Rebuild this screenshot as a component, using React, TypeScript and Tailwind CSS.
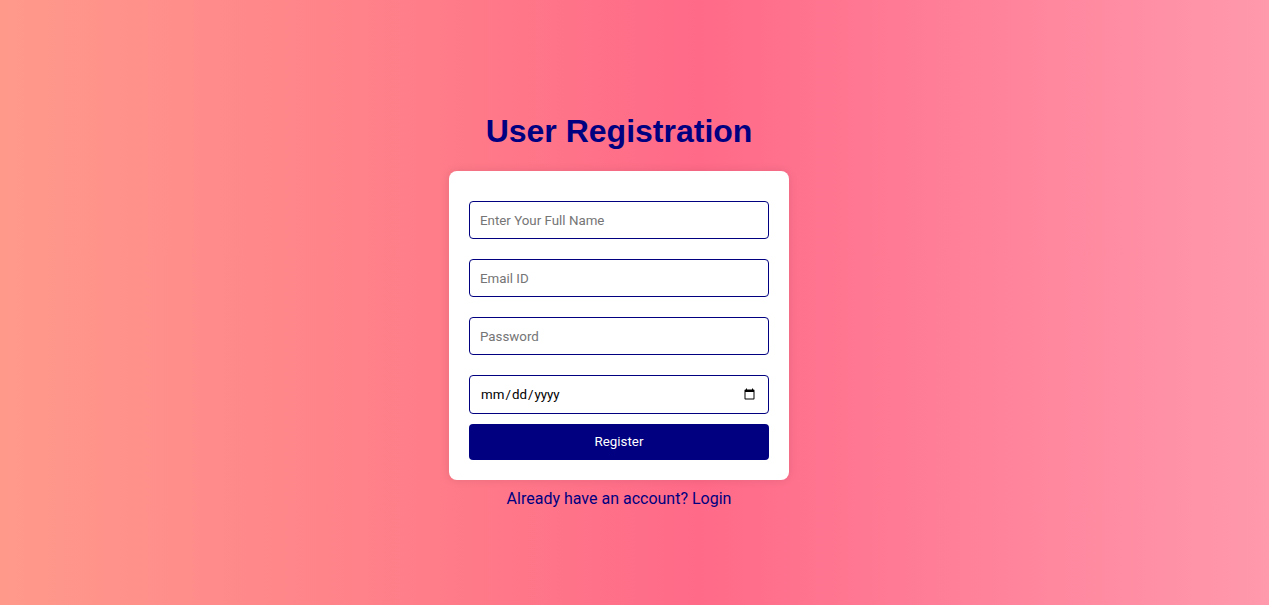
export default function App() {
  const inputCls =
    'block w-[300px] h-[38px] my-[10px] px-[10px] border border-[#000080] rounded-[4px] bg-white text-[13.33px] text-black placeholder:text-[#757575] outline-none font-[Roboto,sans-serif]'

  return (
    <div className="min-h-screen w-full bg-[linear-gradient(90deg,#ff9a8b_0%,#ff6a88_55%,#ff99ac_100%)] flex flex-col items-center pt-[113px] pr-[31px] font-['Liberation_Sans',Arial,sans-serif]">
      <h1 className="text-[32px] leading-[37px] font-bold text-[#000080] mb-[21px]">
        User Registration
      </h1>

      <form
        className="w-[340px] bg-white rounded-[8px] px-[20px] py-[20px] shadow-[0_0_10px_rgba(0,0,0,0.1)] flex flex-col"
        onSubmit={(e) => e.preventDefault()}
      >
        <input type="text" placeholder="Enter Your Full Name" className={inputCls} />
        <input type="email" placeholder="Email ID" className={inputCls} />
        <input type="password" placeholder="Password" className={inputCls} />
        <input type="date" className={inputCls + ' !h-[39px]'} />
        <button
          type="submit"
          className="w-[300px] h-[36px] bg-[#000080] text-white text-[13.33px] rounded-[4px] font-[Roboto,sans-serif]"
        >
          Register
        </button>
      </form>

      <p className="mt-[10px] text-[16px] leading-[18px] text-[#000080] font-[Roboto,sans-serif]">
        Already have an account? <a href="#">Login</a>
      </p>
    </div>
  )
}
